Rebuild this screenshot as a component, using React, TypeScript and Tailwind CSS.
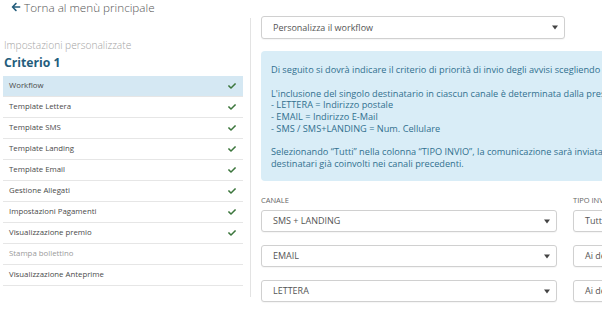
import { FaArrowLeft, FaCheck } from "react-icons/fa";

const steps = [
  { label: "Workflow", done: true, active: true },
  { label: "Template Lettera", done: true },
  { label: "Template SMS", done: true },
  { label: "Template Landing", done: true },
  { label: "Template Email", done: true },
  { label: "Gestione Allegati", done: true },
  { label: "Impostazioni Pagamenti", done: true },
  { label: "Visualizzazione premio", done: true },
  { label: "Stampa bollettino", done: false, disabled: true },
  { label: "Visualizzazione Anteprime", done: false },
];

const channels = [
  { canale: "SMS + LANDING", tipo: "Tutti" },
  { canale: "EMAIL", tipo: "Ai destinatari non raggiunti" },
  { canale: "LETTERA", tipo: "Ai destinatari non raggiunti" },
];

function Caret() {
  return (
    <svg width="6" height="5" viewBox="0 0 6 5" className="shrink-0">
      <path d="M0 0.5h6L3 4.5z" fill="#444" />
    </svg>
  );
}

function Select({ value, className }: { value: string; className: string }) {
  return (
    <div
      className={
        "flex items-center justify-between border border-[#d0d0d0] rounded-[3px] bg-white pl-[11px] pr-[6px] text-[9px] text-[#555] shadow-[0_1px_1px_rgba(0,0,0,0.04)] whitespace-nowrap overflow-hidden " +
        className
      }
    >
      <span>{value}</span>
      <Caret />
    </div>
  );
}

export default function App() {
  return (
    <div className="w-[602px] h-[312px] overflow-hidden bg-white flex font-['Open_Sans',sans-serif]">
      {/* Sidebar */}
      <aside className="w-[250px] shrink-0 flex flex-col">
        <div className="flex items-center gap-[3px] pl-[11px] h-[14px] text-[11.7px] leading-[14px] font-light text-[#555]">
          <FaArrowLeft className="text-[#245d7c] w-[10px] h-[10px]" />
          <span>Torna al menù principale</span>
        </div>

        <div className="mt-[24px] pl-[4px] text-[10.2px] leading-[14px] font-light text-[#a3a3a3]">
          Impostazioni personalizzate
        </div>
        <div className="mt-[3px] pl-[4px] text-[12.2px] leading-[16px] font-bold text-[#245d7c]">
          Criterio 1
        </div>

        <ul className="mt-[5px] ml-[3px] w-[240px]">
          {steps.map((s) => (
            <li
              key={s.label}
              className={
                "h-[21px] flex items-center justify-between pl-[6px] pr-[7px] border-b border-[#e6e6e6] text-[7.8px] " +
                (s.active ? "bg-[#d5e8f3] " : "") +
                (s.disabled ? "text-[#9a9a9a]" : "text-[#4a4a4a]")
              }
            >
              <span>{s.label}</span>
              {s.done && <FaCheck className="text-[#3c763d] w-[8px] h-[8px]" />}
            </li>
          ))}
        </ul>
      </aside>

      <div className="w-px shrink-0 bg-[#e3e3e3] mt-[18px] h-[279px]" />

      {/* Content */}
      <main className="pl-[10px] pt-[16px] flex flex-col">
        <Select value="Personalizza il workflow" className="w-[304px] h-[23px]" />

        <div className="mt-[12px] w-[560px] h-[130px] rounded-[4px] bg-[#d9edf7] pl-[10px] pt-[13px] text-[9.2px] leading-[11.75px] text-[#31708f] whitespace-nowrap">
          <p>Di seguito si dovrà indicare il criterio di priorità di invio degli avvisi scegliendo l'ordine dei canali.</p>
          <p className="mt-[11.75px]">L'inclusione del singolo destinatario in ciascun canale è determinata dalla presenza del dato:</p>
          <p>- LETTERA = Indirizzo postale</p>
          <p>- EMAIL = Indirizzo E-Mail</p>
          <p>- SMS / SMS+LANDING = Num. Cellulare</p>
          <p className="mt-[11.75px]">Selezionando “Tutti” nella colonna “TIPO INVIO”, la comunicazione sarà inviata a tutti i destinatari del canale, inclusi i</p>
          <p>destinatari già coinvolti nei canali precedenti.</p>
        </div>

        <div className="mt-[14px] flex gap-[16px] text-[7.5px] leading-[10px] text-[#666] uppercase">
          <span className="w-[296px]">Canale</span>
          <span className="whitespace-nowrap">Tipo invio</span>
        </div>

        <div className="mt-[5px] flex flex-col gap-[13px]">
          {channels.map((c) => (
            <div key={c.canale} className="flex gap-[16px]">
              <Select value={c.canale} className="w-[296px] h-[22px] shrink-0" />
              <Select value={c.tipo} className="w-[180px] h-[22px] shrink-0" />
            </div>
          ))}
        </div>
      </main>
    </div>
  );
}
